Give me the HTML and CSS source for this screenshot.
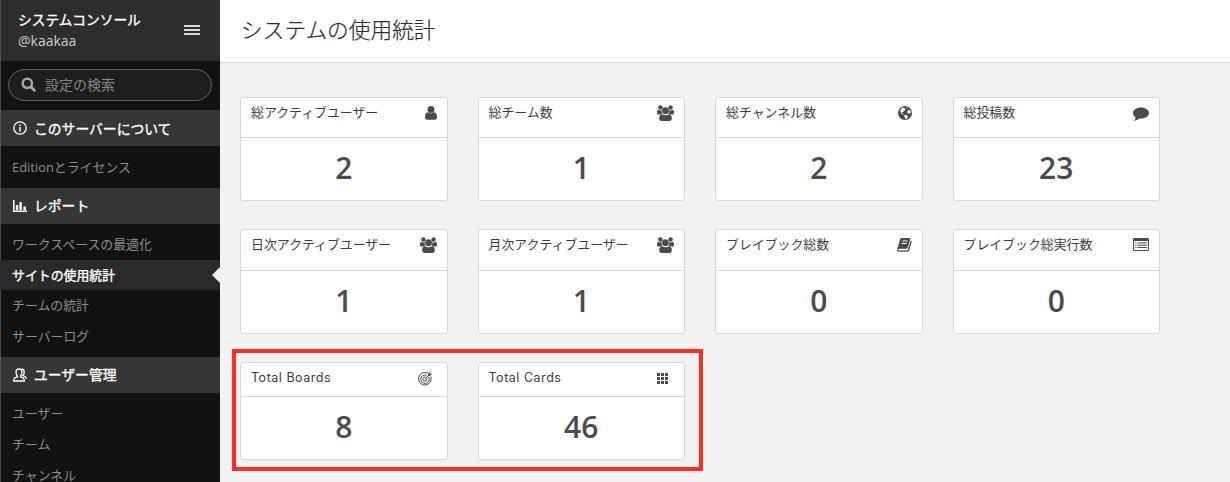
FILE: index.html
```html
<!DOCTYPE html>
<html lang="ja">
<head>
<meta charset="utf-8">
<title>システムコンソール</title>
<link rel="stylesheet" href="styles.css">
</head>
<body>
<svg class="defs" width="0" height="0">
  <symbol id="users" viewBox="0 0 17 16">
    <circle cx="3.4" cy="2.5" r="2.2"/><circle cx="13.6" cy="2.5" r="2.2"/>
    <path d="M0 7.4C0 5.500.6 4.900 1.400 4.900c1 .6 2.500.6 3.300.2C4.500 7 5 7.800 5.600 8.500c-1 .1-1.800.5-2.300 1H1.500C.5 9.500 0 8.700 0 7.400zM17 7.400c0-1.900-.6-2.500-1.400-2.500-1 .6-2.500.6-3.300.2.2 1.900-.3 2.700-.9 3.400 1 .1 1.800.5 2.300 1h1.800c1 0 1.500-.8 1.500-2.100z"/>
    <circle cx="8.500" cy="5.700" r="3.400"/>
    <path d="M4.900 9.100c2 1.600 5.200 1.600 7.200 0 1.900.2 2.700 2 2.700 4.500 0 1.500-.9 2.400-2.300 2.400h-8c-1.400 0-2.300-.9-2.300-2.400 0-2.500.8-4.300 2.700-4.500z"/>
  </symbol>
</svg>
<div class="app">
  <aside class="sidebar">
    <header class="side-head">
      <div><div class="side-title">システムコンソール</div><div class="side-user">@kaakaa</div></div>
      <span class="burger"><i></i><i></i><i></i></span>
    </header>
    <div class="search-wrap">
      <div class="search">
        <svg width="15" height="15" viewBox="0 0 15 15"><circle cx="6.300" cy="6.300" r="4.700" fill="none" stroke="#aaa" stroke-width="2.400"/><path d="M10 10l3.300 3.300" stroke="#aaa" stroke-width="2.800" stroke-linecap="round"/></svg>
        <span>設定の検索</span>
      </div>
    </div>
    <h4 class="category">
      <svg width="14" height="14" viewBox="0 0 14 14" fill="none" stroke="#fff"><circle cx="7" cy="7" r="6.200" stroke-width="1.300"/><path d="M7 6v4.500M7 3.500v1.500" stroke-width="1.500"/></svg>
      <span>このサーバーについて</span>
    </h4>
    <ul class="items"><li>Editionとライセンス</li></ul>
    <h4 class="category">
      <svg width="14" height="14" viewBox="0 0 14 14" fill="#fff"><path d="M0 1h1.500v10.600H14V13H0zM2.800 6h2.400v5H2.800zM6.400 3h2.400v8H6.400zM10.400 7.500h2.600V11h-2.600z"/></svg>
      <span>レポート</span>
    </h4>
    <ul class="items"><li>ワークスペースの最適化</li><li class="active">サイトの使用統計</li><li>チームの統計</li><li>サーバーログ</li></ul>
    <h4 class="category">
      <svg width="14" height="14" viewBox="0 0 14 14" fill="none" stroke="#fff" stroke-width="1.300"><path d="M6 1C3.900 1 3 2.400 3 4.300c0 1.700.6 2.900 1.500 3.700v.9L1.500 10.200C.8 10.600.7 11.500.7 13h10.600c0-1.500-.1-2.400-.8-2.800L7.500 8.900V8C8.400 7.200 9 6 9 4.300 9 2.400 8.100 1 6 1z"/><path d="M8.500 1c1.900.1 2.700 1.500 2.700 3.200 0 1.500-.5 2.500-1.200 3.300l2.300 1.300c.8.400 1 1.300 1 2.300"/></svg>
      <span>ユーザー管理</span>
    </h4>
    <ul class="items"><li>ユーザー</li><li>チーム</li><li>チャンネル</li></ul>
  </aside>
  <main class="main">
    <header class="page-head"><h1>システムの使用統計</h1></header>
    <div class="cards">
      <section class="card"><div class="card-head"><span>総アクティブユーザー</span>
        <svg class="low" width="12" height="14" viewBox="0 0 12 14"><circle cx="6" cy="3.500" r="3.500"/><path d="M3 6.300c1.800 1.500 4.200 1.500 6 0 2.200 0 3 2.200 3 4.700 0 1.700-.9 2.800-2.200 2.800H2.200C.9 13.800 0 12.700 0 11c0-2.500.8-4.700 3-4.700z"/></svg></div><div class="value">2</div></section>
      <section class="card"><div class="card-head"><span>総チーム数</span><svg width="17" height="16"><use href="#users"/></svg></div><div class="value">1</div></section>
      <section class="card"><div class="card-head"><span>総チャンネル数</span>
        <svg class="low" width="14" height="14" viewBox="0 0 14 14"><circle cx="7" cy="7" r="7"/><path fill="#fff" d="M2.600 3.200L4.300 1.700l1.600-.2.900.6-.6 1 1.200-.2-.3 1.300-1.200.6-.5 1.100-1-.1-.6.8.6.8.9.1.3 1-1.300-.3-1.200-1.300-.8-1.700zM8.200 1.300l1.500.4-.4.900-1-.3zM10.200 4.200l1.500-.3 1 1.700.1 1.400-.9.800-1.100-.5-1.200.1-.3-1.300zM5.900 9.200l1.700-.3 2.600 1.200-.6 1.300-1.400 1.500-1.300 0 .1-1.700z"/></svg></div><div class="value">2</div></section>
      <section class="card"><div class="card-head"><span>総投稿数</span>
        <svg class="lower" width="16" height="14" viewBox="0 0 16 14"><path d="M8 .5c4.500 0 8 2.400 8 5.500s-3.500 5.500-8 5.500l-1.800-.1C4.800 12.700 3 13.600 1.200 13.800c-.3-.1-.2-.4 0-.6.800-.7 1.400-1.600 1.600-2.700C1.100 9.500 0 7.900 0 6 0 2.900 3.500.5 8 .5z"/></svg></div><div class="value">23</div></section>
      <section class="card"><div class="card-head"><span>日次アクティブユーザー</span><svg width="17" height="16"><use href="#users"/></svg></div><div class="value">1</div></section>
      <section class="card"><div class="card-head"><span>月次アクティブユーザー</span><svg width="17" height="16"><use href="#users"/></svg></div><div class="value">1</div></section>
      <section class="card"><div class="card-head"><span>プレイブック総数</span>
        <svg class="low" width="15" height="14" viewBox="0 0 15 14"><path d="M4.800 0h7.400c.9 0 1.300.6 1 1.400l-2.500 8.400c-.2.700-.7 1-1.400 1H2c-.7 0-1 .4-.9.900.1.500.5.700 1 .7h7.800c.5 0 .9-.3 1.100-.9l2.700-8.800c.8.200 1.200.7.900 1.500l-2.400 8.100c-.2.900-.9 1.500-1.800 1.500H2C.8 13.800-.2 12.700 0 11.400L3 1.500C3.300.6 3.900 0 4.800 0z"/><path d="M5.500 3h5M4.800 5.500h5" stroke="#fff" stroke-width="1"/></svg></div><div class="value">0</div></section>
      <section class="card"><div class="card-head"><span>プレイブック総実行数</span>
        <svg class="low" width="16" height="13" viewBox="0 0 16 13"><path fill-rule="evenodd" d="M1.400 0h13.200C15.500 0 16 .6 16 1.400v10.200c0 .8-.5 1.400-1.400 1.400H1.400C.5 13 0 12.400 0 11.600V1.400C0 .6.5 0 1.400 0zM1.100 3v8.700c0 .2.200.3.400.3h13c.2 0 .4-.1.400-.3V3zM2.200 4.500h1.200v1H2.200zm2.300 0h9.300v1H4.500zM2.200 6.800h1.200v1H2.200zm2.300 0h9.300v1H4.500zM2.200 9.100h1.200v1H2.200zm2.300 0h9.300v1H4.500z"/></svg></div><div class="value">0</div></section>
      <section class="card latin"><div class="card-head"><span>Total Boards</span>
        <svg class="target" width="14" height="14" viewBox="0 0 14 14"><path d="M10 1.300A6.300 6.300 0 1 0 12.700 4.500M8.800 3.400A4.200 4.200 0 1 0 10.700 5.200M7.600 5.200A2 2 0 1 0 8.700 6.500M6.700 7.200L12 2M10.500 3.500V1.700L12 .4V2h1.500l-1.300 1.500z"/></svg></div><div class="value">8</div></section>
      <section class="card latin"><div class="card-head"><span>Total Cards</span>
        <svg class="grid-icon" width="11" height="11" viewBox="0 0 11 11"><path d="M0 0h3v3H0zM4 0h3v3H4zM8 0h3v3H8zM0 4h3v3H0zM4 4h3v3H4zM8 4h3v3H8zM0 8h3v3H0zM4 8h3v3H4zM8 8h3v3H8z"/></svg></div><div class="value">46</div></section>
    </div>
    <div class="highlight"></div>
  </main>
</div>
</body>
</html>
```
FILE: styles.css
```css
* { box-sizing: border-box; }
body {
  margin: 0;
  overflow: hidden;
  font-family: "Open Sans", "Noto Sans CJK JP", sans-serif;
  font-size: 13px;
  color: #3d3c40;
}
.defs { position: absolute; }
.app { display: flex; width: 1230px; height: 482px; overflow: hidden; }

.sidebar { width: 220px; height: 482px; overflow: hidden; flex: none; background: #121212; box-shadow: inset 1px 0 #484848; }
.side-head {
  height: 61px;
  display: flex;
  justify-content: space-between;
  align-items: center;
  padding: 0 20px 0 17px;
  background: #2d2d2d;
  border-left: 1px solid #505050;
}
.side-title { color: #fff; font-size: 13.700px; line-height: 20px; }
.side-title, .category, .items .active { font-weight: 400; -webkit-text-stroke: .35px #fff; }
.side-user { color: #ccc; font-size: 14px; line-height: 21px; }
.burger { width: 16px; display: grid; gap: 2px; padding-bottom: 1px; }
.burger i { height: 2px; background: #d8d8d8; }
.search-wrap { height: 49px; padding: 8px; }
.search {
  height: 32px;
  width: 204px;
  display: flex;
  align-items: center;
  gap: 9px;
  padding: 0 0 1px 12px;
  border: 1px solid #626262;
  border-radius: 16px;
  background: #1e1e1e;
  color: #858585;
  font-size: 14px;
}
.search span { padding-bottom: 2px; }
.category {
  margin: 0;
  height: 36px;
  display: flex;
  align-items: center;
  gap: 7px;
  padding-left: 12px;
  background: #363636;
  border-left: 1px solid #545454;
  color: #fff;
  font-size: 13.800px;
}
.category span { padding-bottom: 1px; }
.items { margin: 0; padding: 5.500px 0; list-style: none; color: #8c8c8c; }
.items li { height: 30.600px; line-height: 30.600px; padding-left: 12px; white-space: nowrap; font-size: 12.900px; }
.items .active {
  display: flex;
  justify-content: space-between;
  align-items: center;
  color: #fff;
  background: #2a2a2a;
}
.active::after { content: ""; border: solid transparent; border-width: 8px 8px 8px 0; border-right-color: #f2f2f2; }

.main { flex: 1; position: relative; background: #f2f2f2; }
.page-head { height: 63px; display: flex; align-items: center; padding: 0 0 5px 21px; background: #fff; border-bottom: 1px solid #ddd; }
h1 { margin: 0; font-size: 21.700px; font-weight: 300; color: #2c2c2c; -webkit-text-stroke: .2px #2c2c2c; }
.cards {
  display: grid;
  grid-template-columns: repeat(4, 207.500px);
  grid-template-rows: 104px 105px 98px;
  gap: 28px 30px;
  padding: 34px 0 0 20px;
}
.card { display: flex; flex-direction: column; background: #fff; border: 1px solid #d8d8d8; border-radius: 3px; }
.card-head {
  flex: 1;
  display: flex;
  justify-content: space-between;
  align-items: flex-start;
  padding: 4px 10px 0;
  border-bottom: 1px solid #d8d8d8;
  line-height: 20px;
  font-size: 12.900px;
}
.card-head svg { margin-top: 3px; fill: #4b4b4b; }
.card-head .low { margin-top: 4px; }
.card-head .lower { margin-top: 5px; }
.value { height: 62px; line-height: 59px; text-align: center; font-size: 30px; font-weight: 600; color: #4b4b4b; }
.latin .card-head { padding-top: 5px; font-family: Inter, sans-serif; font-size: 12.500px; letter-spacing: .52px; }
.latin .target { margin: 4px 5px 0 0; fill: none; stroke: #4b4b4b; stroke-width: 1; }
.latin .grid-icon { margin: 5px 6px 0 0; }
.highlight { position: absolute; left: 12px; top: 349px; width: 471px; height: 122px; border: 4px solid #ff2d20; }
```
